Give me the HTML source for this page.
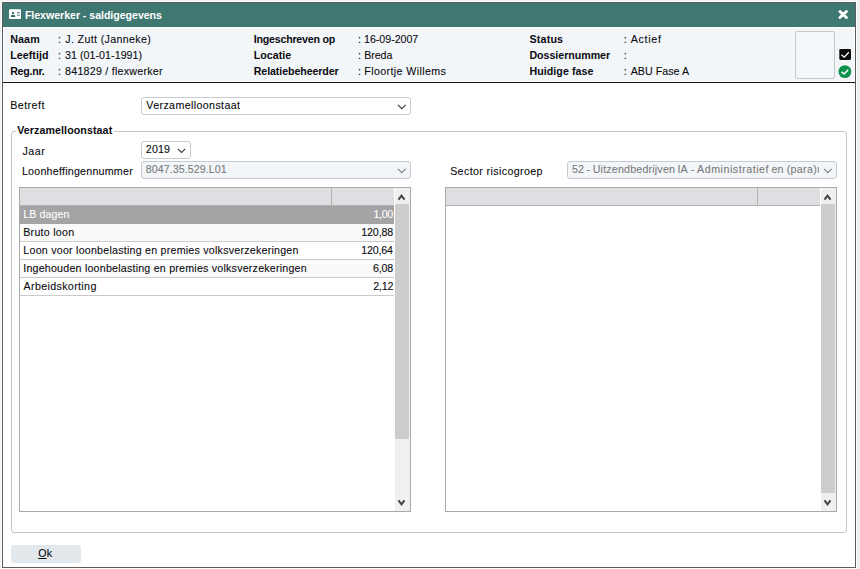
<!DOCTYPE html>
<html lang="nl">
<head>
<meta charset="utf-8">
<title>Flexwerker - saldigegevens</title>
<style>
*{box-sizing:border-box;margin:0;padding:0}
html,body{width:860px;height:569px;overflow:hidden;background:#eef2f3}
body{position:relative;font-family:"Liberation Sans",sans-serif;font-size:10.67px;color:#0b0b10;line-height:16px}
.abs{position:absolute}
.t,.tt{position:absolute;white-space:nowrap;line-height:16px;height:16px;-webkit-text-stroke:0.1px currentColor}
.b{font-weight:bold;-webkit-text-stroke:0}
#win{position:absolute;left:2px;top:2px;width:854px;height:566px;background:#fff;border:1px solid #5c5c5c}
#title{position:absolute;left:3px;top:3px;width:852px;height:24px;background:#3e7871}
#info{position:absolute;left:3px;top:27px;width:852px;height:55px;background:#f2f6f9;border:1px solid #fff}
#sep{position:absolute;left:3px;top:82px;width:852px;height:1px;background:#111}
.dd{position:absolute;border:1px solid #c4cbd3;border-radius:3px;background:#fff;height:18px}
.dd.dis{background:#f3f6f9}
.dd svg{position:absolute}
.grid{position:absolute;border:1px solid #a9a9a9;background:#fff}
.gh{position:absolute;left:0;top:0;height:18px;background:#dedfe3;border-bottom:1px solid #b2b2b2}
.sb{position:absolute;top:0;right:0;width:15px;bottom:0;background:#f0f0f0}
.row{position:absolute;left:0;height:18px;border-bottom:1px solid #cbcbcb}
</style>
</head>
<body>
<div class="abs" style="left:1px;top:1px;width:856px;height:568px;background:#fff"></div>
<div id="win"></div>
<div id="title"></div>
<div id="info"></div>
<div id="sep"></div>

<!-- title bar -->
<svg class="abs" style="left:9px;top:9px" width="12" height="11" viewBox="0 0 12 11">
<rect x="0" y="0.3" width="12" height="9.8" rx="0.8" fill="#fff"/>
<rect x="3" y="2.95" width="2.2" height="2.2" rx="0.8" fill="#2f6b64"/>
<path d="M1.9 7.9 V7.1 Q1.9 6 3 6 H5.1 Q6.2 6 6.2 7.1 V7.9 Z" fill="#2f6b64"/>
<rect x="8" y="3.1" width="2.8" height="1" fill="#3e7871" opacity=".85"/>
<rect x="8" y="4.1" width="2.8" height="1.8" fill="#3e7871" opacity=".25"/>
<rect x="8" y="5.9" width="2.8" height="0.9" fill="#3e7871" opacity=".85"/>
</svg>
<span class="t b" id="ttl" style="left:24.88px;top:7px;letter-spacing:-0.059px;color:#fff">Flexwerker - saldigegevens</span>
<svg class="abs" style="left:838px;top:9px" width="11" height="11" viewBox="0 0 11 11"><path d="M2 2.5 L8.4 8.5 M8.4 2.5 L2 8.5" stroke="#fff" stroke-width="2.9" stroke-linecap="round"/></svg>

<!-- info header -->
<span class="t b" id="a1" style="left:10.16px;top:31px;letter-spacing:0.169px">Naam</span>
<span class="t b" id="a2" style="left:10.16px;top:47px;letter-spacing:0.056px">Leeftijd</span>
<span class="t b" id="a3" style="left:10.16px;top:63px;letter-spacing:-0.248px">Reg.nr.</span>
<span class="t" id="b1c" style="left:58.06px;top:31px">:</span><span class="t" id="b1" style="left:65.23px;top:31px;letter-spacing:0.355px">J. Zutt (Janneke)</span>
<span class="t" id="b2c" style="left:58.06px;top:47px">:</span><span class="t" id="b2" style="left:65.03px;top:47px;letter-spacing:0.048px">31 (01-01-1991)</span>
<span class="t" id="b3c" style="left:58.06px;top:63px">:</span><span class="t" id="b3" style="left:65.09px;top:63px;letter-spacing:0.249px">841829 / flexwerker</span>
<span class="t b" id="c1" style="left:253.74px;top:31px;letter-spacing:-0.222px">Ingeschreven op</span>
<span class="t b" id="c2" style="left:253.74px;top:47px;letter-spacing:0.043px">Locatie</span>
<span class="t b" id="c3" style="left:253.74px;top:63px;letter-spacing:-0.098px">Relatiebeheerder</span>
<span class="t" id="d1c" style="left:358.00px;top:31px">:</span><span class="t" id="d1" style="left:364.12px;top:31px;letter-spacing:-0.046px">16-09-2007</span>
<span class="t" id="d2c" style="left:358.00px;top:47px">:</span><span class="t" id="d2" style="left:364.37px;top:47px;letter-spacing:-0.106px">Breda</span>
<span class="t" id="d3c" style="left:358.00px;top:63px">:</span><span class="t" id="d3" style="left:364.37px;top:63px;letter-spacing:0.379px">Floortje Willems</span>
<span class="t b" id="e1" style="left:529.58px;top:31px;letter-spacing:0.168px">Status</span>
<span class="t b" id="e2" style="left:529.40px;top:47px;letter-spacing:-0.034px">Dossiernummer</span>
<span class="t b" id="e3" style="left:529.40px;top:63px;letter-spacing:0.060px">Huidige fase</span>
<span class="t" id="f1c" style="left:623.67px;top:31px">:</span><span class="t" id="f1" style="left:630.71px;top:31px;letter-spacing:0.708px">Actief</span>
<span class="t" id="f2" style="left:623.67px;top:47px">:</span>
<span class="t" id="f3c" style="left:623.67px;top:63px">:</span><span class="t" id="f3" style="left:630.71px;top:63px;letter-spacing:0.035px">ABU Fase A</span>

<div class="abs" style="left:795px;top:31px;width:40px;height:48px;border:1px solid #c6c8cc;border-radius:2px;background:#f4f7fa"></div>
<svg class="abs" style="left:839px;top:48px" width="12" height="13" viewBox="0 0 12 13"><rect x="0.3" y="0.9" width="11.7" height="11" rx="1.3" fill="#0a0a0a"/><path d="M2.4 6.8 L5.3 9.2 L9.8 4.2" stroke="#fff" stroke-width="1.3" fill="none"/></svg>
<svg class="abs" style="left:838px;top:65px" width="14" height="14" viewBox="0 0 14 14"><circle cx="6.9" cy="6.65" r="6.45" fill="#10924e"/><path d="M3.6 6.9 L6.1 9.1 L10.2 4.7" stroke="#fff" stroke-width="1.45" fill="none"/></svg>

<!-- form -->
<span class="t" id="g1" style="left:10.29px;top:97px;letter-spacing:0.449px">Betreft</span>
<div class="dd" style="left:141px;top:97px;width:270px"><svg style="left:255px;top:5.6px" width="11" height="6" viewBox="0 0 11 6"><path d="M0.9 0.8 L4.8 4.6 L8.7 0.8" stroke="#3a3a3a" stroke-width="1.15" fill="none"/></svg></div>
<span class="t" id="g2" style="left:146.29px;top:97px;letter-spacing:0.380px">Verzamelloonstaat</span>

<div class="abs" style="left:11px;top:131px;width:836px;height:402px;border:1px solid #c4c4c4;border-radius:3px"></div>
<div class="abs" style="left:16px;top:128px;width:98px;height:6px;background:#fff"></div>
<span class="t b" id="g3" style="left:17.14px;top:122px;letter-spacing:0.093px">Verzamelloonstaat</span>

<span class="t" id="g4" style="left:22.52px;top:143px;letter-spacing:0.492px">Jaar</span>
<div class="dd" style="left:141px;top:141px;width:50px"><svg style="left:35.4px;top:5.8px" width="9" height="6" viewBox="0 0 9 6"><path d="M0.8 0.8 L4.5 4.5 L8.2 0.8" stroke="#3a3a3a" stroke-width="1.15" fill="none"/></svg></div>
<span class="t" id="g5" style="left:145.87px;top:141px;letter-spacing:0.153px">2019</span>
<span class="t" id="g6" style="left:21.96px;top:163px;letter-spacing:0.239px">Loonheffingennummer</span>
<div class="dd dis" style="left:141px;top:161px;width:270px"><svg style="left:255px;top:5.6px" width="11" height="6" viewBox="0 0 11 6"><path d="M0.9 0.8 L4.8 4.6 L8.7 0.8" stroke="#808080" stroke-width="1.15" fill="none"/></svg></div>
<span class="t" id="g7" style="left:145.75px;top:161px;letter-spacing:0.068px;color:#7a7a7a">8047.35.529.L01</span>
<span class="t" id="g8" style="left:450.13px;top:163px;letter-spacing:0.380px">Sector risicogroep</span>
<div class="dd dis" style="left:567px;top:161px;width:270px"><svg style="left:254.8px;top:5.8px" width="10" height="6" viewBox="0 0 10 6"><path d="M1 0.8 L4.8 4.6 L8.6 0.8" stroke="#808080" stroke-width="1.15" fill="none"/></svg></div>
<span class="t" id="h1" style="left:572.06px;top:161px;color:#7a7a7a">52</span> <span class="t" id="h2" style="left:586.61px;top:161px;color:#7a7a7a">-</span> <span class="t" id="h3" style="left:592.72px;top:161px;letter-spacing:0.189px;color:#7a7a7a">Uitzendbedrijven</span> <span class="t" id="h4" style="left:677.48px;top:161px;color:#7a7a7a">IA</span> <span class="t" id="h5" style="left:690.65px;top:161px;color:#7a7a7a">-</span> <span class="t" id="h6" style="left:697.05px;top:161px;letter-spacing:0.528px;color:#7a7a7a">Administratief</span> <span class="t" id="h7" style="left:771.57px;top:161px;color:#7a7a7a">en</span> <span class="t" id="h8" style="left:786.75px;top:161px;letter-spacing:0.308px;color:#7a7a7a">(para)</span><div class="abs" style="left:816px;top:162px;width:3px;height:16px;overflow:hidden"><span class="tt" style="left:1.2px;top:-1px;color:#7a7a7a">medisch</span></div>

<!-- left grid -->
<div class="grid" style="left:19px;top:187px;width:392px;height:325px">
  <div class="gh" style="width:374px"><div class="abs" style="left:311px;top:0;width:1px;height:17px;background:#b2b2b2"></div></div>
  <div class="row" style="top:18px;width:374px;background:#a4a4a4;border-color:#a4a4a4"></div>
  <div class="row" style="top:36px;width:374px;background:#fafafa"></div>
  <div class="row" style="top:54px;width:374px"></div>
  <div class="row" style="top:72px;width:374px;background:#fafafa"></div>
  <div class="row" style="top:90px;width:374px"></div>
  <div class="sb"><div class="abs" style="left:0;top:16px;width:14px;height:235px;background:#cdcdcd"></div>
  <svg class="abs" style="left:2px;top:5px" width="10" height="8" viewBox="0 0 10 8"><path d="M1.5 6.7 L4.5 2.7 L7.5 6.7" stroke="#444" stroke-width="2" fill="none"/></svg>
  <svg class="abs" style="left:2px;bottom:4px" width="10" height="8" viewBox="0 0 10 8"><path d="M1.5 1.3 L4.5 5.3 L7.5 1.3" stroke="#444" stroke-width="2" fill="none"/></svg></div>
</div>
<span class="t" id="r1" style="left:23.28px;top:206px;letter-spacing:0.059px;color:#fff">LB dagen</span>
<span class="t" id="n1" style="left:373.43px;top:206px;letter-spacing:-0.341px;color:#fff">1,00</span>
<span class="t" id="r2" style="left:23.27px;top:224px;letter-spacing:0.251px">Bruto loon</span>
<span class="t" id="n2" style="left:361.24px;top:224px;letter-spacing:-0.120px">120,88</span>
<span class="t" id="r3" style="left:23.37px;top:242px;letter-spacing:0.232px">Loon voor loonbelasting en premies volksverzekeringen</span>
<span class="t" id="n3" style="left:361.29px;top:242px;letter-spacing:-0.211px">120,64</span>
<span class="t" id="r4" style="left:23.23px;top:260px;letter-spacing:0.218px">Ingehouden loonbelasting en premies volksverzekeringen</span>
<span class="t" id="n4" style="left:373.04px;top:260px;letter-spacing:-0.173px">6,08</span>
<span class="t" id="r5" style="left:23.57px;top:278px;letter-spacing:0.356px">Arbeidskorting</span>
<span class="t" id="n5" style="left:373.13px;top:278px;letter-spacing:-0.187px">2,12</span>

<!-- right grid -->
<div class="grid" style="left:445px;top:187px;width:392px;height:325px">
  <div class="gh" style="width:374px"><div class="abs" style="left:311px;top:0;width:1px;height:17px;background:#b2b2b2"></div></div>
  <div class="sb"><div class="abs" style="left:0;top:16px;width:14px;height:289px;background:#cdcdcd"></div>
  <svg class="abs" style="left:2px;top:5px" width="10" height="8" viewBox="0 0 10 8"><path d="M1.5 6.7 L4.5 2.7 L7.5 6.7" stroke="#444" stroke-width="2" fill="none"/></svg>
  <svg class="abs" style="left:2px;bottom:4px" width="10" height="8" viewBox="0 0 10 8"><path d="M1.5 1.3 L4.5 5.3 L7.5 1.3" stroke="#444" stroke-width="2" fill="none"/></svg></div>
</div>

<!-- ok button -->
<div class="abs" style="left:11px;top:545px;width:70px;height:18px;background:#e3e8ec;border-radius:3px"></div>
<span class="t" id="ok" style="left:38.2px;top:545px;letter-spacing:0.15px"><u>O</u>k</span>
</body>
</html>
